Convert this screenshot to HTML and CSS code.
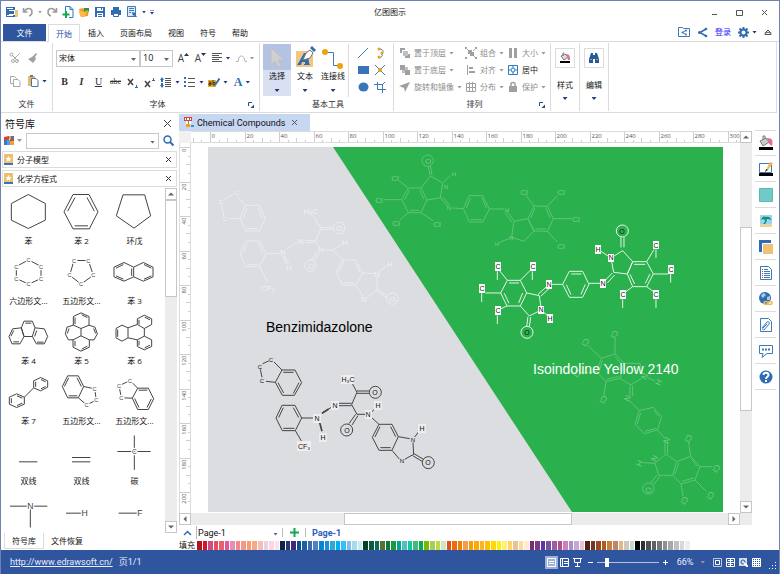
FILE: index.html
```html
<!DOCTYPE html>
<html lang="zh-CN">
<head>
    <meta charset="UTF-8">
    <meta name="viewport" content="width=device-width, initial-scale=1.0">
    <title>亿图图示</title>
    <link rel="stylesheet" href="styles.css">
</head>
<body>

<!-- title bar -->
<header class="titlebar">
    <div class="quick">
        <button class="qa" aria-label="Edraw"><svg width="12" height="12" viewBox="0 0 12 12"><path fill="#2f6cb3" d="M0 1h9v3H3v1h5v3H3v1h6v2H0z"/><path fill="#f0c57a" d="M9 4h3v7H9z"/><path stroke="#fff" d="M1 2.500h6M1 9.500h6"/></svg></button>
        <button class="qa" aria-label="撤销"><svg width="12" height="12" viewBox="0 0 12 12"><path fill="none" stroke="#9a9a9a" stroke-width="1.500" d="M1.500 2v4h4M2 5.500C5 1 10 2 10 6c0 2-1 3.500-3 4"/></svg></button>
        <i class="caret grey"></i>
        <button class="qa" aria-label="重做"><svg width="12" height="12" viewBox="0 0 12 12"><path fill="none" stroke="#9a9a9a" stroke-width="1.500" d="M10.500 2v4h-4M10 5.500C7 1 2 2 2 6c0 2 1 3.500 3 4"/></svg></button>
        <button class="qa" aria-label="新建"><svg width="12" height="12" viewBox="0 0 12 12"><path fill="#fff" stroke="#2f7cc0" d="M3.500 5V.5H8l3 3v8H7"/><path fill="none" stroke="#2f7cc0" d="M8 .5v3h3"/><path stroke="#12a84e" stroke-width="2" d="M4 5v7M.5 8.500h7"/></svg></button>
        <button class="qa" aria-label="打开"><svg width="12" height="12" viewBox="0 0 12 12"><path fill="#f0a020" d="M1 3l4-1 1 1 5-1-1 8-7 1z"/><path fill="#2f8f4e" d="M6 2h5v4L9 4 6 6z"/><path fill="#f6bb4c" d="M1 5l7 1-1 5-5-1z"/></svg></button>
        <button class="qa" aria-label="保存"><svg width="12" height="12" viewBox="0 0 12 12"><path fill="#2f6cb3" d="M1 1h10v10H1z"/><path fill="#fff" d="M3 2h6v3H3zM3 7h6v4H3z"/><path stroke="#2f6cb3" d="M4 8.500h4M4 10.500h4M7.500 2v2"/></svg></button>
        <button class="qa" aria-label="打印"><svg width="12" height="12" viewBox="0 0 12 12"><path fill="#2f6cb3" d="M3 1h6v3H3zM1 4h10v5H1z"/><path fill="#fff" stroke="#2f6cb3" d="M3.500 7.500h5v3h-5z"/></svg></button>
        <button class="qa" aria-label="导出"><svg width="12" height="12" viewBox="0 0 12 12"><path fill="#dce9f6" stroke="#3d7ab8" d="M1.500 .5h8v10h-8z"/><path stroke="#3d7ab8" d="M3 2.500h5M3 4.500h5M3 6.500h2"/><path fill="#2f6cb3" d="M6 6l4 1-1 1 2 3H9L8 9l-1 1z"/></svg></button>
        <i class="caret"></i>
        <i class="caret bar"></i>
    </div>
    <h1 class="app-title">亿图图示</h1>
    <div class="window-buttons">
        <button aria-label="最小化"><svg width="9" height="9" viewBox="0 0 9 9"><path stroke="#555" d="M2 6.500h5"/></svg></button>
        <button aria-label="最大化"><svg width="9" height="9" viewBox="0 0 9 9"><path fill="none" stroke="#555" d="M1.500 2.500h6v5h-6z"/></svg></button>
        <button aria-label="关闭"><svg width="9" height="9" viewBox="0 0 9 9"><path stroke="#555" d="M2 2l5 5M7 2L2 7"/></svg></button>
    </div>
</header>

<!-- ribbon tabs -->
<nav class="tabs">
    <button class="tab file-tab">文件</button>
    <button class="tab active">开始</button>
    <button class="tab">插入</button>
    <button class="tab">页面布局</button>
    <button class="tab">视图</button>
    <button class="tab">符号</button>
    <button class="tab">帮助</button>
    <div class="account">
        <button aria-label="共享文件夹"><svg width="12" height="12" viewBox="0 0 12 12"><path fill="none" stroke="#3d7ab8" d="M.5 1.500h4l1 1h6v8H.5z"/><path fill="none" stroke="#3d7ab8" d="M8 4.500L4.500 6.500 8 8.500"/><circle cx="8" cy="4.500" r="1" fill="#3d7ab8"/><circle cx="4.500" cy="6.500" r="1" fill="#3d7ab8"/><circle cx="8" cy="8.500" r="1" fill="#3d7ab8"/></svg></button>
        <button aria-label="分享"><svg width="11" height="11" viewBox="0 0 11 11"><path fill="none" stroke="#2f6cb3" stroke-width="1.500" d="M9 2L3 5.500 9 9"/><circle cx="2.500" cy="5.500" r="1.500" fill="#2f6cb3"/><circle cx="9" cy="2" r="1.300" fill="#2f6cb3"/><circle cx="9" cy="9" r="1.300" fill="#2f6cb3"/></svg></button>
        <a class="login" href="#">登录</a>
        <button aria-label="设置"><svg width="11" height="11" viewBox="0 0 11 11"><circle cx="5.500" cy="5.500" r="3" fill="none" stroke="#2f6cb3" stroke-width="2"/><path stroke="#2f6cb3" stroke-width="2" d="M5.500 0v2M5.500 9v2M0 5.500h2M9 5.500h2M1.500 1.500l1.500 1.500M8 8l1.500 1.500M9.500 1.500L8 3M3 8L1.500 9.500"/></svg><i class="caret"></i></button>
        <button aria-label="折叠功能区"><svg width="8" height="8" viewBox="0 0 8 8"><path fill="none" stroke="#555" d="M1 6.500h6L7 5 4 2 1 5zM2 5l2-1 2 1"/></svg></button>
    </div>
</nav>

<!-- ribbon -->
<section class="ribbon">
    <div class="group g-file">
        <div class="clip">
            <button aria-label="剪切"><svg width="12" height="12" viewBox="0 0 12 12"><path fill="none" stroke="#a8a8a8" d="M10.500 1.500L5 7M3 3l6 6"/><circle cx="2.500" cy="2.500" r="1.500" fill="none" stroke="#a8a8a8"/><circle cx="8" cy="9" r="1.500" fill="none" stroke="#a8a8a8"/><circle cx="4" cy="9" r="1.500" fill="none" stroke="#a8a8a8"/></svg></button>
            <button aria-label="格式刷"><svg width="12" height="12" viewBox="0 0 12 12"><path fill="#a0a0a0" d="M9 1l1 1-2 3 1 2-3 4-5-4 4-2 1-1z"/></svg></button>
            <button aria-label="复制"><svg width="12" height="12" viewBox="0 0 12 12"><path fill="#fff" stroke="#a8a8a8" d="M1.500 1.500h4l2 2v5h-6z"/><path fill="#fff" stroke="#a8a8a8" d="M4.500 4.500H9l2 2v5H4.500z"/></svg></button>
            <button aria-label="粘贴"><svg width="12" height="12" viewBox="0 0 12 12"><path fill="#edb95e" d="M1 1h7v10H1z"/><path fill="#777" d="M3 0h3v2H3z"/><path fill="#fff" stroke="#3d7ab8" d="M4.500 3.500H9l2 2v6H4.500z"/></svg><i class="caret"></i></button>
        </div>
        <div class="group-label">文件</div>
    </div>

    <div class="group g-font">
        <div class="font-row">
            <span class="select family"><select aria-label="字体"><option>宋体</option></select></span>
            <span class="select size"><select aria-label="字号"><option>10</option></select></span>
            <button class="b17" aria-label="增大字号"><span class="big-a">A</span><svg width="5" height="10" viewBox="0 0 5 10"><path fill="#333" d="M0 3l2.500-3L5 3z"/></svg></button>
            <button class="b17" aria-label="减小字号"><span class="big-a">A</span><svg width="5" height="10" viewBox="0 0 5 10"><path fill="#333" d="M0 0h5L2.500 3z"/></svg></button>
            <button class="b24" aria-label="对齐"><svg width="11" height="10" viewBox="0 0 11 10"><path stroke="#555" stroke-width="1" d="M0 .5h10M0 2.500h7M0 4.500h10M0 6.500h7M0 8.500h10"/></svg><i class="caret"></i></button>
            <button class="b24" aria-label="曲线文本"><svg width="11" height="10" viewBox="0 0 11 10"><path fill="none" stroke="#b0b0b0" d="M0 8.500h2C3 1 8 1 9 8.500h2"/></svg><i class="caret grey"></i></button>
        </div>
        <div class="font-row">
            <button class="b17 serif"><b>B</b></button>
            <button class="b17 serif"><b><i>I</i></b></button>
            <button class="b17 serif"><u>U</u></button>
            <button class="b17 serif strike"><s>abc</s></button>
            <button class="b17" aria-label="下标"><svg width="11" height="11" viewBox="0 0 11 11"><path stroke="#444" stroke-width="1.500" d="M1 2l5 6M6 2L1 8"/><path stroke="#2f6cb3" d="M8 10.500h3M9.500 8v2"/></svg></button>
            <button class="b17" aria-label="上标"><svg width="11" height="11" viewBox="0 0 11 11"><path stroke="#444" stroke-width="1.500" d="M1 4l5 6M6 4l-5 6"/><path stroke="#2f6cb3" d="M8 3.500h3M9.500 1v2"/></svg></button>
            <button class="b24" aria-label="行距"><svg width="12" height="11" viewBox="0 0 12 11"><path stroke="#555" d="M5 1.500h6M5 3.500h6M5 5.500h6M5 7.500h6M5 9.500h6"/><path fill="#2f6cb3" d="M0 3l2-3 2 3zM0 8l2 3 2-3zM1 3h2v2H1zM1 6h2v2H1z"/></svg><i class="caret"></i></button>
            <button class="b24" aria-label="项目符号"><svg width="12" height="11" viewBox="0 0 12 11"><path stroke="#555" d="M4 1.500h7M4 5.500h7M4 9.500h7"/><path fill="#2f6cb3" d="M0 0h2v2H0zM0 4h2v2H0zM0 8h2v2H0z"/></svg><i class="caret"></i></button>
            <button class="b24" aria-label="突出显示"><svg width="12" height="11" viewBox="0 0 12 11"><path fill="#f0a81c" d="M0 3h8v7H0z"/><path stroke="#333" fill="none" d="M1 5h2v3H1V6.500h2M5 3v5h2V5.500H5"/><path stroke="#2f6cb3" stroke-width="2" d="M11.500 1.500L7 8"/></svg><i class="caret"></i></button>
            <button class="b24 serif font-color"><b>A</b><i class="caret"></i></button>
        </div>
        <div class="group-label">字体
            <button class="launcher" aria-label="字体设置"><svg width="6" height="6" viewBox="0 0 6 6"><path fill="none" stroke="#2b4a8c" d="M.5 4V.5H4"/><path fill="#2b4a8c" d="M6 2.500V6H2.500z"/></svg></button>
        </div>
    </div>

    <div class="group g-tools">
        <div class="tools-body">
            <button class="big selected"><svg width="26" height="26" viewBox="0 0 26 26"><path fill="#d0d0d0" stroke="#c0c0c4" d="M7 4l13 12h-6l3 6-3 1-3-6-4 4z"/></svg>选择<i class="caret"></i></button>
            <button class="big"><svg width="26" height="26" viewBox="0 0 26 26"><path fill="#f0c884" d="M4 7h17v16H4z"/><path fill="#2f6cb3" d="M5 21l2-3 5-9h4l1 10 1 2h-6v-1h1v-2h-3l-1 3zm6-6h2v-3z"/><path fill="#fff" stroke="#777" d="M11 16l3-7 4-3 3 3-3 5z"/><path fill="#2f6cb3" d="M18 4l2-2 4 4-2 2z"/></svg>文本<i class="caret"></i></button>
            <button class="big"><svg width="26" height="26" viewBox="0 0 26 26"><path fill="none" stroke="#3d7ab8" d="M5 8.500h8.500v13H19"/><circle cx="5" cy="8" r="3" fill="#eda20e"/><circle cx="20" cy="22" r="3" fill="#eda20e"/></svg>连接线<i class="caret"></i></button>
            <div class="shapes">
                <button aria-label="直线"><svg width="12" height="12" viewBox="0 0 12 12"><path stroke="#3d7ab8" d="M1 11L11 1"/></svg></button>
                <button aria-label="弧线"><svg width="12" height="12" viewBox="0 0 12 12"><path fill="none" stroke="#3d7ab8" d="M5 2c5 0 5 4 2 5 2 0 2 3-2 4"/><circle cx="5" cy="2" r="1.500" fill="#eda20e"/><circle cx="8" cy="6" r="1.500" fill="#eda20e"/><circle cx="5" cy="10" r="1.500" fill="#eda20e"/></svg></button>
                <button aria-label="矩形"><svg width="12" height="12" viewBox="0 0 12 12"><path fill="#3a74b8" d="M1 2h11v8H1z"/></svg></button>
                <button aria-label="连接点"><svg width="12" height="12" viewBox="0 0 12 12"><path stroke="#3d7ab8" d="M1 1l10 10M11 1L1 11"/><circle cx="6" cy="6" r="2" fill="#eda20e"/></svg></button>
                <button aria-label="椭圆"><svg width="12" height="12" viewBox="0 0 12 12"><ellipse cx="6.500" cy="6" rx="5" ry="4.500" fill="#3a74b8"/></svg></button>
                <button aria-label="裁剪"><svg width="12" height="12" viewBox="0 0 12 12"><path fill="none" stroke="#3d7ab8" d="M0 3.500h8.500V12M3.500 1v7.500H12M8 4l3-3"/></svg></button>
            </div>
        </div>
        <div class="group-label">基本工具</div>
    </div>

    <div class="group g-arrange">
        <div class="arrange">
            <button class="cmd"><svg width="12" height="12" viewBox="0 0 12 12"><path fill="#a0a0a0" d="M1 1h5v2H3v3H1zM7 7h4v4H6V9h1z"/><path fill="#c0c0c0" d="M4 4h5v5H4z"/></svg>置于顶层<i class="caret grey"></i></button>
            <button class="cmd"><svg width="12" height="12" viewBox="0 0 12 12"><path fill="none" stroke="#b0b0b0" d="M2 2l8 8M10 2L8 4"/><path fill="#a0a0a0" d="M3 3h4v4H3zM5 5h4v4H5zM0 0h2v2H0zM10 0h2v2h-2zM0 10h2v2H0zM10 10h2v2h-2z"/></svg>组合<i class="caret grey"></i></button>
            <button class="cmd"><svg width="12" height="12" viewBox="0 0 12 12"><path fill="#a0a0a0" d="M2 1h3v10H2zM7 1h3v10H7z"/></svg>大小<i class="caret grey"></i></button>
            <button class="cmd"><svg width="12" height="12" viewBox="0 0 12 12"><path fill="#a0a0a0" d="M1 1h5v5H1zM6 6h5v5H6z"/><path fill="#c0c0c0" d="M6 3h3v3H6zM3 6h3v3H3z"/></svg>置于底层<i class="caret grey"></i></button>
            <button class="cmd"><svg width="12" height="12" viewBox="0 0 12 12"><path fill="#a0a0a0" d="M2 1h1v10H2zM4 3h4v2H4zM4 7h6v2H4z"/></svg>对齐<i class="caret grey"></i></button>
            <button class="cmd on"><svg width="12" height="12" viewBox="0 0 12 12"><path fill="none" stroke="#2f7cc0" d="M1.500 1.500h9v9h-9z"/><circle cx="6" cy="6" r="2" fill="none" stroke="#2f7cc0"/><path stroke="#2f7cc0" d="M6 1v3M6 8v3M1 6h3M8 6h3"/></svg>居中</button>
            <button class="cmd"><svg width="12" height="12" viewBox="0 0 12 12"><path fill="#a0a0a0" d="M11 1L6 11 5 7 0 5z"/></svg>旋转和镜像<i class="caret grey"></i></button>
            <button class="cmd"><svg width="12" height="12" viewBox="0 0 12 12"><path fill="none" stroke="#a0a0a0" d="M1.500 2.500h9v8h-9zM4.500 1v10M7.500 1v10M1 6.500h10"/></svg>分布<i class="caret grey"></i></button>
            <button class="cmd"><svg width="12" height="12" viewBox="0 0 12 12"><path fill="#a0a0a0" d="M2 5h8v6H2z"/><path fill="none" stroke="#a0a0a0" stroke-width="1.500" d="M4 5V3c0-2 4-2 4 0v2"/></svg>保护<i class="caret grey"></i></button>
        </div>
        <div class="group-label">排列
            <button class="launcher" aria-label="排列设置"><svg width="6" height="6" viewBox="0 0 6 6"><path fill="none" stroke="#2b4a8c" d="M.5 4V.5H4"/><path fill="#2b4a8c" d="M6 2.500V6H2.500z"/></svg></button>
        </div>
    </div>

    <div class="group">
        <button class="tall"><span class="box"><svg width="12" height="12" viewBox="0 0 12 12"><path fill="#ddd" stroke="#777" d="M2 4l4-2 3 3-4 3z"/><path fill="none" stroke="#777" d="M4 4V1h1"/><path fill="#e0709a" d="M7 2c4 0 4 3 4 6H9z"/><path fill="#000" d="M1 9h10v2H1z"/></svg></span>样式<i class="caret"></i></button>
    </div>
    <div class="group">
        <button class="tall"><span class="box"><svg width="12" height="12" viewBox="0 0 12 12"><path fill="#2a5a96" d="M3 1h2v2h2V1h2l2 6v4H7V7H5v4H1V7z"/><path stroke="#7ba3cf" d="M2 7.500h2M8 7.500h2"/></svg></span>编辑<i class="caret"></i></button>
    </div>
</section>

<main class="main">

    <!-- symbol library -->
    <aside class="library">
        <div class="lib-title"><h2>符号库</h2><button aria-label="关闭符号库"><svg width="9" height="9" viewBox="0 0 9 9"><path stroke="#444" d="M1 1l7 7M8 1L1 8"/></svg></button></div>
        <div class="lib-search">
            <button aria-label="符号库菜单"><svg width="11" height="11" viewBox="0 0 11 11"><path fill="#d8423a" d="M0 2l5-1v4H0z"/><path fill="#3d7ab8" d="M0 5h3v5H0zM7 1h3v3H7z"/><path fill="#4fa2d8" d="M3 5h3v5H3z"/><path fill="#e8a33c" d="M6 6h4v4H6zM5 1h2v3H5z"/><path fill="#d8423a" d="M6 4h4v2H6z"/></svg><i class="caret grey"></i></button>
            <span class="select"><input type="text" aria-label="搜索符号"></span>
            <button aria-label="搜索"><svg width="11" height="11" viewBox="0 0 11 11"><circle cx="4.500" cy="4.500" r="3.500" fill="none" stroke="#2f6cb3" stroke-width="1.500"/><path stroke="#2f6cb3" stroke-width="2" d="M7 7l3.500 3.500"/></svg></button>
        </div>
        <div class="category"><svg width="9" height="11" viewBox="0 0 9 11"><path fill="#edbf6c" d="M0 0h9v9H0z"/><path fill="#3a74b8" d="M0 9h9v2H0z"/><path fill="#fff" d="M4.500 2l1 2h2L6 5.500 6.500 8l-2-1.500-2 1.500L3 5.500 1.500 4h2z"/></svg>分子模型<button aria-label="关闭分子模型"><svg width="7" height="7" viewBox="0 0 7 7"><path stroke="#333" d="M1 1l5 5M6 1L1 6"/></svg></button></div>
        <div class="category"><svg width="9" height="11" viewBox="0 0 9 11"><path fill="#edbf6c" d="M0 0h9v9H0z"/><path fill="#3a74b8" d="M0 9h9v2H0z"/><path fill="#fff" d="M4.500 2l1 2h2L6 5.500 6.500 8l-2-1.500-2 1.500L3 5.500 1.500 4h2z"/></svg>化学方程式<button aria-label="关闭化学方程式"><svg width="7" height="7" viewBox="0 0 7 7"><path stroke="#333" d="M1 1l5 5M6 1L1 6"/></svg></button></div>

        <div class="lib-body">
            <div class="symbols">
                <button class="sym"><svg viewBox="0 0 159 138"><path d="M79 18l51 27v50l-51 25-51-25V45z"/></svg>苯</button>
                <button class="sym"><svg viewBox="0 0 159 138"><path d="M54 18h48l27 52-26 51H54L27 70zM60 27L38 68M96 27l22 41M59 112h40"/></svg>苯 2</button>
                <button class="sym"><svg viewBox="0 0 159 138"><path d="M45 19h65l18 63-50 37-53-37z"/></svg>环戊</button>

                <button class="sym"><svg viewBox="0 0 159 138"><path d="M80 34l37 20v36l-37 17-37-17V54z"/><text x="80" y="40">C</text><text x="117" y="60">C</text><text x="117" y="96">C</text><text x="80" y="113">C</text><text x="43" y="96">C</text><text x="43" y="60">C</text></svg>六边形文...</button>
                <button class="sym"><svg viewBox="0 0 159 138"><path d="M57 36h43l15 44-37 27-34-27z"/><text x="57" y="42">C</text><text x="100" y="42">C</text><text x="115" y="86">C</text><text x="78" y="113">C</text><text x="44" y="86">C</text></svg>五边形文...</button>
                <button class="sym"><svg viewBox="0 0 159 138"><path d="M48 42l29 14v29L48 98 18 85V56zM77 56l29-14 29 14v29l-29 13-29-13M46 48L24 59M46 92L24 82M71 60v22M108 48l22 11M108 92l22-10"/></svg>苯 3</button>

                <button class="sym"><svg viewBox="0 0 159 138"><path d="M32 61l26-3 8 26-12 22H30L21 84zM66 38h25l8 20-8 26H66l-8-26zM99 58l28 3 10 23-10 22h-24L91 84M27 83l8-17M34 100h17M70 44h18M98 84l6-18M105 101h20"/></svg>苯 4</button>
                <button class="sym"><svg viewBox="0 0 159 138"><path d="M78 13l24 11v26L78 60 55 50V24zM78 128l-24-12V94l24-12 25 12v22zM78 60v22M55 50l-19 6-5 20 9 18h14M102 50l18 6 7 20-10 18h-14M60 27v20M80 19l17 8M42 60l-5 15M116 60l6 15M60 97v16M80 122l17-9"/></svg>苯 5</button>
                <button class="sym"><svg viewBox="0 0 159 138"><path d="M60 58v30L42 98 24 88V60l18-10zM88 31l21-11 22 11v17l-22 12-21-12zM109 83l22 11v20l-22 10-21-10V94zM60 58l28-10M109 60v23M88 94l-28-6M29 63v22M93 34v14M110 26l16 8M93 97v14M110 118l16-8"/></svg>苯 6</button>

                <button class="sym"><svg viewBox="0 0 159 138"><path d="M44 76l23 10v21l-23 10-22-10V86zM116 27l21 10v19l-21 11-21-9V37zM67 86l28-28M28 89v15M45 82l16 7M45 111l16-7M101 40v15M117 33l14 7M117 61l14-7"/></svg>苯 7</button>
                <button class="sym"><svg viewBox="0 0 159 138"><path d="M38 22h32l16 32-16 34H38L22 54zM86 54l33 7 5 34-29 14-25-21M41 28L28 54M66 28l13 26M41 82h26"/><text x="119" y="66">C</text><text x="124" y="100">C</text><text x="95" y="114">C</text></svg>五边形文...</button>
                <button class="sym"><svg viewBox="0 0 159 138"><path d="M89 59h32l16 32-16 32H89L73 89zM89 59L66 36 33 52l7 36 33 1M92 65h26M130 91l-13 26M93 117L80 90"/><text x="66" y="42">C</text><text x="33" y="58">C</text><text x="40" y="94">C</text></svg>五边形文...</button>

                <button class="sym"><svg viewBox="0 0 159 138"><path d="M51 100h55"/></svg>双线</button>
                <button class="sym"><svg viewBox="0 0 159 138"><path d="M51 87h55M51 100h55"/></svg>双线</button>
                <button class="sym"><svg viewBox="0 0 159 138"><path d="M28 69h100M79 21v103"/><text class="l" x="79" y="76">C</text></svg>碳</button>

                <button class="sym" aria-label="N"><svg viewBox="0 0 159 138"><path d="M24 53h112M85 53v64"/><text class="xl" x="85" y="62">N</text></svg></button>
                <button class="sym" aria-label="H"><svg viewBox="0 0 159 138"><path d="M33 74h56"/><text class="xl" x="89" y="83">H</text></svg></button>
                <button class="sym" aria-label="F"><svg viewBox="0 0 159 138"><path d="M32 74h60"/><text class="xl" x="96" y="83">F</text></svg></button>
            </div>
            <div class="scroll v lib-scroll"><button class="up" aria-label="向上"></button><span class="thumb"></span><span class="after"></span><button class="down" aria-label="向下"></button></div>
        </div>
        <div class="lib-tabs"><button class="active">符号库</button><button>文件恢复</button></div>
    </aside>

    <!-- drawing area -->
    <section class="workspace">
        <div class="doc-tabs">
            <div class="doc-tab"><svg width="11" height="11" viewBox="0 0 11 11"><path fill="#d8423a" d="M1 0h8v4H1z"/><path fill="#fff" d="M2 1h1v2H2zM4 1h2v2H4zM7 1h1v2H7z"/><path fill="#fff" d="M3 4h5v3H3z"/><path fill="none" stroke="#3fa757" d="M5.500 4v4"/><path fill="#eda20e" d="M3 7h4v3H3z"/><path fill="#3d8fd8" d="M8 8h3v2H8z"/></svg>Chemical Compounds<button aria-label="关闭文档"><svg width="7" height="7" viewBox="0 0 7 7"><path stroke="#555" d="M1 1l5 5M6 1L1 6"/></svg></button></div>
        </div>
        <div class="sheet">
            <div class="corner"></div>
            <svg class="ruler-h" id="rulerH"></svg>
            <div class="scroll v sheet-v"><button class="up" aria-label="向上"></button><span class="before"></span><span class="thumb"></span><span class="after"></span><button class="down" aria-label="向下"></button></div>
            <svg class="ruler-v" id="rulerV"></svg>
            <div class="canvas">
                <svg class="drawing">
                    <g transform="translate(-191 -143)">
                        <path fill="#dcdde1" d="M208 147h515v365H208z"/>
                        <path fill="#2ab04d" d="M333 147h390v365H572z"/>
                    </g>

                    <!-- faded benzimidazolone -->
                    <g class="faint" transform="translate(-15 -31) scale(.3333)">
                        <path d="M208 280h42l18 38-18 39h-40l-17-38zM208 280l-22-25M172 247l-28 16M136 278l8 36M158 320l35-1M246 287l13 31M213 350h33M214 288l-12 29"/>
                        <path d="M209 387h41l20 38-20 39h-40l-18-39zM246 394l14 30M214 394l-13 30M215 457h32M270 425h42M250 464l26 48M332 410l34-20M318 430l14 26M324 430l14 26"/>
                        <path d="M386 386h32M386 392h32M418 388l17-38-26-42M435 346h36M435 352h36M418 388l12 16M424 418l-18 26M431 421l-18 26M444 414l26 1 27-18M470 415l30 28"/>
                        <path d="M500 443l40 2 20 38-20 37h-40l-20-38zM503 450l-15 32M538 452l14 30M504 513h32M560 483l34 2M603 495l1 40-32 22M561 553l-21-33M610 478l22-16M604 532l30 19M604 539l28 18"/>
                        <circle cx="489" cy="348" r="17"/><circle cx="404" cy="461" r="17"/><circle cx="649" cy="560" r="17"/>
                    </g>
                    <g class="faint-text" transform="translate(-191 -143)">
                        <text x="237" y="195" class="s">C</text><text x="221" y="204" class="s">C</text><text x="225" y="221" class="s">C</text>
                        <text x="311" y="214">H₃C</text><text x="283" y="255">N</text><text x="301" y="244">N</text><text x="289" y="270">H</text><text x="268" y="291">CF₃</text>
                        <text x="339" y="231">O</text><text x="321" y="252">N</text><text x="311" y="269">O</text><text x="345" y="245">H</text>
                        <text x="377" y="277">N</text><text x="390" y="267">H</text><text x="364" y="302">N</text><text x="392" y="302">O</text>
                    </g>

                    <!-- faded chlorinated chain, top -->
                    <g class="faint-green" transform="translate(269 -31) scale(.3333)">
                        <path d="M-117 228h-38l-20 35 20 39h38l18-38zM-152 235l-14 28M-121 235l13 27M-151 295h30M-117 228l28-36 37 21-7 44-40 7M-95 163l5 27M-89 162l5 27M-52 213l22-22M-155 228l-28-22M-175 263h-54M-155 302l-26 22M-117 302l36 24M-59 257l22 26M-53 254l22 26M-24 288l34 2"/>
                        <path d="M10 290l18-39h40l20 40-20 39H28zM19 288l13-30M66 257l13 31M32 323h33M88 291h44M134 302l22 28M140 298l22 28"/>
                        <path d="M162 328l42-8 18 37-30 31-37-12zM146 380l-28 12M204 320l18-38 40 1 18 37-18 38-40-1zM212 318l13-29M258 289l13 29M226 351h32M222 282l-24-32M262 283l30-32M280 320h56M262 358l30 32"/>
                        <circle cx="-97" cy="146" r="17"/>
                    </g>
                    <g class="green-text" transform="translate(-191 -143)">
                        <text x="428" y="164">O</text><text x="454" y="176" class="s">H</text><text x="446" y="189" class="s">N</text><text x="449" y="210" class="s">N</text>
                        <text x="395" y="181">Cl</text><text x="379" y="203">Cl</text><text x="396" y="226">Cl</text><text x="437" y="227">Cl</text>
                        <text x="507" y="212" class="s">H</text><text x="511" y="240" class="s">N</text><text x="497" y="246" class="s">H</text>
                        <text x="524" y="195">Cl</text><text x="561" y="195">Cl</text><text x="576" y="222">Cl</text><text x="561" y="249">Cl</text>
                    </g>

                    <!-- faded chlorinated chain, bottom -->
                    <g class="faint-green" transform="translate(269 177) scale(.3333)">
                        <path d="M424 115l41-13 27 28-12 45-42 10-28-30zM428 121l-11 33M465 110l20 22M440 178l36-9M424 115l-40-38M465 102V56M410 155l-46 4M438 185l-6 42"/>
                        <path d="M492 130h48l8 34M544 176l-32 19-32-20M560 172l24 10M510 197v32M518 197v32M508 242l30 30"/>
                        <path d="M538 272l42-10 25 28-13 40-40 11-27-29zM542 278l-10 34M582 270l15 20M555 334l33-9M592 330l22 24M615 366v34M623 366v34"/>
                        <path d="M618 402l-33 28 12 36h41l12-41zM585 430l-36-2M592 464l-20 26M600 469l-20 26M650 425l42-16 28 31-15 40-42 12-25-26M657 428l-13 36M694 417l18 22M665 484l36-10M692 409l-6-42M720 440h38M705 480l34 34M663 492l6 36"/>
                        <circle cx="565" cy="506" r="17"/>
                    </g>
                    <g class="green-text" transform="translate(-191 -143)">
                        <text transform="translate(583 341) rotate(120)">Cl</text><text transform="translate(612 333) rotate(120)">Cl</text><text transform="translate(575 372) rotate(120)">Cl</text><text transform="translate(601 398) rotate(120)">Cl</text>
                        <text transform="translate(656 381) rotate(115)">H</text><text transform="translate(642 375) rotate(115)">N</text><text transform="translate(625 397) rotate(115)">N</text><text transform="translate(664 439) rotate(115)">N</text>
                        <text transform="translate(652 457) rotate(115)">N</text><text transform="translate(637 462) rotate(115)">H</text><text transform="translate(646 489) rotate(115)">O</text>
                        <text transform="translate(686 437) rotate(120)">Cl</text><text transform="translate(714 467) rotate(120)">Cl</text><text transform="translate(708 494) rotate(120)">Cl</text><text transform="translate(682 499) rotate(120)">Cl</text>
                    </g>

                    <!-- isoindoline yellow -->
                    <g class="bright" transform="translate(269 -31) scale(.3333)">
                        <path d="M483 376v30M492 376v30M453 438l35-22 30 33-16 37-41-5zM420 416l24 16M518 449h42l20 37-20 38h-42l-16-38zM522 457h34M570 486l-14 28M524 516l-14-29M560 449l22-36M580 486h44M560 524l22 16M518 524l-22 16M457 483l-23 24M464 489l-22 24M387 514h34"/>
                        <path d="M308 517l20-39h40l19 39-19 39h-40zM334 486h30M376 517l-13 30M333 548l-14-30M308 517h-32M260 524l-26 23M267 530l-25 23"/>
                        <path d="M142 505h39l19 38-19 39h-40l-19-39zM147 513h30M188 543l-12 30M147 574l-14-30M200 543l38 8 6 43-36 18-27-30M142 505l-24-30M181 505l30-30M122 543H76M141 582l-22 10M250 600l14 12M204 614l-4 30M212 616l-4 28"/>
                        <circle cx="487" cy="357" r="18"/><circle cx="201" cy="661" r="18"/>
                        <path d="M588 412v26M632 486v26M588 562v26M488 562v26M112 478v26M217 478v26M65 544v26M112 610v26"/>
                    </g>
                    <g transform="translate(-191 -143)">
                        <path class="plate" d="M653 241h6v8h-6zM668 265h6v9h-6zM653 290h6v9h-6zM620 290h6v9h-6zM495 262h6v9h-6zM530 262h6v9h-6zM479 284h6v9h-6zM495 306h6v9h-6zM595 245h6v9h-6zM608 254h6v8h-6zM600 279h6v9h-6zM546 280h6v9h-6zM538 306h6v8h-6zM547 314h6v9h-6z"/>
                        <g class="atom">
                            <text x="656" y="248">C</text><text x="671" y="272">C</text><text x="656" y="297">C</text><text x="623" y="297">C</text>
                            <text x="498" y="269">C</text><text x="533" y="269">C</text><text x="482" y="291">C</text><text x="498" y="313">C</text>
                            <text x="598" y="252">H</text><text x="611" y="260">N</text><text x="603" y="286">N</text><text x="549" y="287">N</text><text x="541" y="312">N</text><text x="550" y="321">H</text>
                            <text x="622" y="234">O</text><text x="527" y="335">O</text>
                        </g>
                    </g>

                    <!-- benzimidazolone -->
                    <g class="dark" transform="translate(-15 167) scale(.3333)">
                        <path d="M318 180h39l20 38-22 38h-36l-21-39zM318 180l-24-24M278 153l-18 8M253 178l5 24M270 214l28 3M322 187h31M369 218l-17 32M323 249l-17-31"/>
                        <path d="M318 286h39l20 38-19 38h-39l-19-38zM352 293l16 30M322 293l-14 30M322 355h33M377 324h35M358 362l20 34M438 310l28-18"/>
                        <path class="thick" d="M430 334l8 30M438 310l20-13"/>
                        <path d="M487 280h40M487 287h40M527 284l16-37-14-26M543 243h36M543 250h36M527 284l16 29h26M539 313l-20 28M546 317l-18 28M586 307l12-12M584 320l25 23"/>
                        <path d="M609 343h39l19 37-19 41h-39l-20-39zM612 350l-15 31M644 350l15 30M613 413h31M667 380l34 6M711 397l2 36-27 15M670 447l-22-26M716 381l14-18M712 430l31 18M710 437l30 18"/>
                        <circle cx="598" cy="247" r="18"/><circle cx="512" cy="360" r="18"/><circle cx="757" cy="458" r="18"/>
                    </g>
                    <g transform="translate(-191 -143)">
                        <path class="plate grey" d="M341 375h13v9h-13zM313 414h8v9h-8zM319 433h8v9h-8zM297 441h14v10h-14zM331 401h8v9h-8zM374 401h8v9h-8zM365 410h7v9h-7zM418 424h8v9h-8z"/>
                        <g class="atom">
                            <text x="348" y="382">H₃C</text><text x="317" y="421">N</text><text x="323" y="440">H</text><text x="304" y="449">CF₃</text>
                            <text x="335" y="408">N</text><text x="378" y="408">H</text><text x="368" y="417">N</text><text x="422" y="431">H</text>
                            <text x="375" y="395">O</text><text x="347" y="433">O</text><text x="428" y="465">O</text>
                            <text x="413" y="442" class="tiny">N</text><text x="402" y="463" class="tiny">N</text>
                            <text x="271" y="362" class="tiny">C</text><text x="260" y="369" class="tiny">C</text><text x="262" y="383" class="tiny">C</text>
                        </g>
                        <text class="caption" x="266" y="332">Benzimidazolone</text>
                        <text class="caption white" x="533" y="374">Isoindoline Yellow 2140</text>
                    </g>
                </svg>
            </div>
            <div class="scroll h sheet-h"><button class="left" aria-label="向左"></button><span class="before"></span><span class="thumb"></span><span class="after"></span><button class="right" aria-label="向右"></button></div>
        </div>
        <div class="pages">
            <button class="chevron" aria-label="展开"><svg width="9" height="6" viewBox="0 0 9 6"><path fill="none" stroke="#2f6cb3" stroke-width="1.500" d="M1 5l3.500-3.500L8 5"/></svg></button>
            <span class="select page-select"><select aria-label="页面"><option>Page-1</option></select></span>
            <button class="add" aria-label="添加页面"><svg width="9" height="9" viewBox="0 0 9 9"><path stroke="#12a84e" stroke-width="2" d="M4.500 0v9M0 4.500h9"/></svg></button>
            <button class="page-tab">Page-1</button>
        </div>
        <div class="fill"><span>填充</span><div class="palette" id="palette"></div></div>
    </section>

    <!-- right hand tools -->
    <nav class="side">
        <button aria-label="填充"><svg width="16" height="16" viewBox="0 0 16 16"><path fill="#ccc" stroke="#777" d="M2 6l6-3 3 4-6 4z"/><path fill="none" stroke="#777" d="M5 5V1h2v3"/><path fill="#e0709a" d="M9 3c6 0 6 3 5 8l-3-2z"/><path fill="#000" d="M1 12h14v3H1z"/></svg></button>
        <button aria-label="线条"><svg width="16" height="16" viewBox="0 0 16 16"><path fill="#fff" stroke="#3d7ab8" d="M1.500 2.500h12v9h-12z"/><path fill="#edb95e" d="M12 1l3 1-5 7-2 0z"/><path fill="#333" d="M8 8l2 1-3 2z"/><path fill="#000" d="M1 12h14v3H1z"/></svg></button>
        <button aria-label="主题颜色"><svg width="16" height="16" viewBox="0 0 16 16"><path fill="#70cbc8" stroke="#5fb8b5" d="M1.500 1.500h13v13h-13z"/></svg></button>
        <button aria-label="图片"><svg width="16" height="16" viewBox="0 0 16 16"><path fill="#9fd4ee" d="M2 2h12v9H2z"/><path fill="#e8d6a0" d="M2 11h12v3H2z"/><path fill="#12907c" d="M3 7c1-4 4-4 5-3 3-1 5 1 5 3-2-1-3-1-4-1 0 2-1 4-2 5H5c2-2 2-3 2-4-1-1-3-1-4 0z"/></svg></button>
        <button aria-label="图层"><svg width="16" height="16" viewBox="0 0 16 16"><path fill="#2f6cb3" d="M1 1h12v12H1z"/><path fill="#edc274" stroke="#fff" d="M4.500 4.500h11v11h-11z"/></svg></button>
        <button aria-label="文档"><svg width="16" height="16" viewBox="0 0 16 16"><path fill="#fff" stroke="#3d7ab8" d="M2.500 1.500h8l3 3v10h-11z"/><path stroke="#d8423a" d="M4 4.500h1M4 6.500h1M4 8.500h1M4 10.500h1M4 12.500h1"/><path stroke="#3d7ab8" d="M6 4.500h4M6 6.500h6M6 8.500h6M6 10.500h6M6 12.500h6"/></svg></button>
        <button aria-label="超链接"><svg width="16" height="16" viewBox="0 0 16 16"><circle cx="7" cy="7" r="6" fill="#2f6cb3"/><path fill="#a5cbe9" d="M3 4l3-2 2 2-2 2-2 1zM9 6l3-1v4H9z"/><path fill="none" stroke="#edb95e" stroke-width="1.500" d="M6 12c0-2 4-2 4 0s-4 2-4 0zM10 12c0-2 4-2 4 0s-4 2-4 0z"/></svg></button>
        <button aria-label="附件"><svg width="16" height="16" viewBox="0 0 16 16"><path fill="#fff" stroke="#3d7ab8" d="M2.500 1.500h8l3 3v10h-11z"/><path fill="none" stroke="#3d7ab8" d="M4 11l5-6c2-1 3 1 2 2l-5 6c-1 0-2-1-1-2l4-4"/></svg></button>
        <button aria-label="批注"><svg width="16" height="16" viewBox="0 0 16 16"><path fill="#fff" stroke="#3d7ab8" d="M1.500 2.500h13v8H9l-5 4 1-4H1.500z"/><path stroke="#3d7ab8" stroke-width="2" d="M4 6.500h2M7 6.500h2M10 6.500h2"/></svg></button>
        <button aria-label="帮助"><svg width="16" height="16" viewBox="0 0 16 16"><circle cx="8" cy="8" r="6.500" fill="#2f6cb3"/><path fill="none" stroke="#fff" stroke-width="2" d="M5.500 6c0-3 5-3 5 0 0 2-2.500 1.500-2.500 4M8 11v2"/></svg></button>
    </nav>
</main>

<footer class="status">
    <a href="http://www.edrawsoft.cn/">http://www.edrawsoft.cn/</a>
    <span>页1/1</span>
    <div class="view">
        <button class="on" aria-label="普通视图"><svg width="9" height="9" viewBox="0 0 9 9"><path fill="none" stroke="#fff" d="M.5 .5h8v8h-8zM2 3.500h5M2 5.500h5"/></svg></button>
        <button aria-label="大纲视图"><svg width="9" height="9" viewBox="0 0 9 9"><path fill="none" stroke="#fff" d="M.5 .5h8v8h-8zM2.500 1v7M4 3.500h4M4 5.500h4"/></svg></button>
        <button aria-label="演示"><svg width="9" height="9" viewBox="0 0 9 9"><path fill="none" stroke="#fff" d="M0 .5h9M1.500 1v3.500h6V1M4.500 5v3M2 8.500h5"/></svg></button>
        <button aria-label="缩小"><svg width="9" height="9" viewBox="0 0 9 9"><path stroke="#fff" d="M2 4.500h5"/></svg></button>
        <input type="range" min="10" max="400" value="66" aria-label="缩放">
        <button aria-label="放大"><svg width="9" height="9" viewBox="0 0 9 9"><path stroke="#fff" d="M2 4.500h5M4.500 2v5"/></svg></button>
        <button class="zoom">66%<i class="caret grey"></i></button>
        <button aria-label="适合页面"><svg width="9" height="9" viewBox="0 0 9 9"><path fill="none" stroke="#fff" d="M2.500 2.500h4v4h-4z"/><path fill="none" stroke="#b9c7e4" d="M.5 .5h8v8h-8z"/></svg></button>
        <button aria-label="适合窗口"><svg width="9" height="9" viewBox="0 0 9 9"><path fill="none" stroke="#fff" d="M.5 .5h8v8h-8zM4.500 0v9M0 4.500h9M2 2.500h5M2 6.500h5"/></svg></button>
        <button aria-label="放大镜"><svg width="9" height="9" viewBox="0 0 9 9"><path fill="#d5deef" d="M0 0h8v8H0z"/><circle cx="4" cy="4" r="2" fill="none" stroke="#2f559f"/><path stroke="#fff" stroke-width="2" d="M5 5l4 4"/></svg></button>
        <button aria-label="网格"><svg width="9" height="9" viewBox="0 0 9 9"><path fill="none" stroke="#fff" d="M.5 .5h8v8h-8zM2.500 0v9M4.500 0v9M6.500 0v9M0 2.500h9M0 4.500h9M0 6.500h9"/></svg></button>
    </div>
    <svg class="grip" width="8" height="8" viewBox="0 0 8 8"><path fill="#fff" d="M6 0h1v1H6zM3 3h1v1H3zM6 3h1v1H6zM0 6h1v1H0zM3 6h1v1H3zM6 6h1v1H6z"/></svg>
</footer>

<script src="script.js"></script>
</body>
</html>
```

FILE: styles.css
```css
* {
    box-sizing: border-box;
}

body {
    margin: 0;
    height: 100vh;
    display: flex;
    flex-direction: column;
    overflow: hidden;
    background-color: #fff;
    border: 1px solid #6f82b5;
    border-bottom: none;
    color: #111;
    font-family: "Open Sans", "Noto Sans CJK SC", sans-serif;
    font-size: 8px;
    line-height: 12px;
}

button {
    display: flex;
    align-items: center;
    justify-content: center;
    padding: 0;
    border: none;
    background: none;
    color: inherit;
    font: inherit;
    cursor: pointer;
}

svg {
    display: block;
    flex: none;
}

h1, h2 {
    margin: 0;
    font-weight: normal;
}

select, input {
    font: inherit;
    color: inherit;
    margin: 0;
}

.caret {
    flex: none;
    width: 5px;
    height: 3px;
    background-color: #1f3c80;
    clip-path: polygon(0 0, 100% 0, 50% 100%);
}

.caret.grey {
    background-color: #999;
}

.caret.bar {
    height: 5px;
    clip-path: polygon(0 0, 100% 0, 100% 20%, 0 20%, 0 50%, 100% 50%, 50% 100%, 0 50%);
}

/* title bar */
.titlebar {
    display: grid;
    grid-template-columns: 1fr auto 1fr;
    align-items: center;
    height: 22px;
    flex: none;
}

.quick {
    display: flex;
    align-items: center;
    gap: 4px;
    padding-left: 5px;
}

.quick .caret {
    width: 4px;
}

.app-title {
    font-size: 8px;
}

.window-buttons {
    display: flex;
    justify-content: flex-end;
    gap: 16px;
    padding-right: 10px;
}

/* ribbon tabs */
.tabs {
    display: flex;
    flex: none;
    height: 19px;
    padding-left: 2px;
    border-bottom: 1px solid #dcdcdc;
}

.tab {
    padding: 0 8px;
    margin-top: 1px;
}

.file-tab {
    width: 43px;
    margin-right: 2px;
    background-color: #2f559f;
    color: #fff;
}

.tab.active {
    padding: 0 7px;
    height: 18px;
    border: 1px solid #dcdcdc;
    border-bottom: none;
    background-color: #fff;
    color: #2f559f;
}

.account {
    display: flex;
    align-items: center;
    gap: 7px;
    margin-left: auto;
    padding-right: 7px;
}

.account button {
    gap: 3px;
}

.login {
    color: #2a22ff;
    text-decoration: none;
}

/* ribbon */
.ribbon {
    display: flex;
    flex: none;
    height: 71px;
    margin-right: 2px;
    border-bottom: 1px solid #dcdcdc;
    border-right: 1px solid #dcdcdc;
}

.group {
    display: flex;
    flex-direction: column;
    margin: 1px 0;
    border-right: 1px solid #dcdcdc;
}

.group-label {
    position: relative;
    margin-top: auto;
    padding-bottom: 1px;
    text-align: center;
    color: #333;
}

.launcher {
    position: absolute;
    right: 5px;
    top: 4px;
}

.g-file {
    width: 52px;
}

.clip {
    display: grid;
    grid-template-columns: 18px 24px;
    row-gap: 11px;
    padding: 9px 0 0 6px;
}

.clip button {
    justify-content: flex-start;
    gap: 3px;
    padding-left: 2px;
}

.g-font {
    width: 207px;
    padding-left: 3px;
}

.font-row {
    display: flex;
    align-items: center;
    height: 18px;
    margin-top: 6px;
}

.select {
    position: relative;
    display: flex;
    height: 17px;
}

.select::after {
    content: "";
    position: absolute;
    right: 4px;
    top: 50%;
    width: 5px;
    height: 3px;
    background-color: #666;
    clip-path: polygon(0 0, 100% 0, 50% 100%);
    pointer-events: none;
}

.select select, .select input {
    appearance: none;
    width: 100%;
    padding: 0 2px;
    border: 1px solid #c8c8c8;
    border-radius: 0;
    background-color: #fff;
    outline: none;
}

.family {
    width: 84px;
}

.size {
    width: 33px;
    margin-right: 2px;
}

.size select {
    font-size: 9px;
}

.b17 {
    width: 17px;
    flex: none;
}

.b24 {
    width: 24px;
    flex: none;
    gap: 3px;
}

.big-a {
    font-size: 10px;
    color: #444;
}

.serif {
    font-family: "Liberation Serif", serif;
    font-size: 10px;
    color: #333;
}

.strike {
    font-size: 8px;
}

.font-color {
    color: #2f6cb3;
    font-size: 12px;
}

.g-tools {
    width: 134px;
    padding-left: 3px;
}

.tools-body {
    display: flex;
    padding-top: 1px;
}

.big {
    flex-direction: column;
    justify-content: flex-start;
    width: 28px;
    height: 52px;
}

.big .caret {
    margin-top: 7px;
}

.big.selected {
    background: linear-gradient(#b4c3e2 50%, #d8e0f2 50%);
}

.shapes {
    display: grid;
    grid-template-columns: 17px 17px;
    row-gap: 5px;
    align-content: start;
    margin-left: 1px;
    padding: 3px 0 0 5px;
    border-left: 1px solid #dcdcdc;
    height: 53px;
}

.g-arrange {
    width: 157px;
    padding-left: 5px;
}

.arrange {
    display: grid;
    grid-template-columns: auto auto auto;
    justify-content: start;
    gap: 5px 3px;
    padding-top: 4px;
    color: #8c8c8c;
}

.cmd {
    justify-content: flex-start;
    gap: 3px;
}

.cmd.on {
    color: #222;
}

.tall {
    flex-direction: column;
    width: 28px;
    padding-top: 5px;
}

.box {
    display: flex;
    align-items: center;
    justify-content: center;
    width: 20px;
    height: 20px;
    margin-bottom: 11px;
    border: 1px solid #dcdcdc;
}

.tall .caret {
    margin-top: 6px;
}

/* main area */
.main {
    display: flex;
    flex: 1;
    min-height: 0;
}

.library {
    display: flex;
    flex-direction: column;
    width: 176px;
    flex: none;
    padding-left: 1px;
}

.lib-title {
    display: flex;
    justify-content: space-between;
    align-items: center;
    height: 19px;
    padding: 2px 5px 0 3px;
}

.lib-title h2 {
    font-size: 10px;
}

.lib-search {
    display: flex;
    align-items: center;
    height: 17px;
    gap: 4px;
    padding: 0 3px 0 2px;
}

.lib-search button {
    gap: 2px;
}

.lib-search .select {
    flex: 1;
    height: 16px;
}

.category {
    display: flex;
    align-items: center;
    gap: 4px;
    height: 17px;
    margin-top: 2px;
    padding: 0 4px 0 1px;
    border: 1px solid #dcdcdc;
}

.category button {
    margin-left: auto;
}

.lib-body {
    display: flex;
    flex: 1;
    min-height: 0;
    margin-top: 1px;
}

.symbols {
    display: grid;
    grid-template-columns: repeat(3, 53px);
    grid-auto-rows: 60px;
    flex: 1;
    overflow: hidden;
}

.sym {
    flex-direction: column;
    justify-content: flex-start;
    white-space: nowrap;
}

.sym svg {
    width: 100%;
    height: 47px;
    fill: none;
    stroke: #444;
    stroke-width: 3;
}

.sym text {
    fill: #444;
    stroke: #fff;
    stroke-width: 7;
    paint-order: stroke;
    text-anchor: middle;
    font-family: "Liberation Sans", sans-serif;
    font-size: 17px;
}

.sym .l {
    font-size: 20px;
}

.sym .xl {
    font-size: 26px;
}

.lib-tabs {
    display: flex;
    flex: none;
    height: 17px;
    padding: 0 0 1px 2px;
}

.lib-tabs button {
    padding: 0 7px;
}

.lib-tabs .active {
    border: 1px solid #dcdcdc;
    border-top: none;
}

/* scroll bars */
.scroll {
    display: flex;
    background-color: #ececec;
}

.scroll.v {
    flex-direction: column;
    width: 12px;
}

.scroll button, .thumb {
    border: 1px solid #c6c6c6;
    background-color: #fff;
}

.scroll button {
    flex: none;
    width: 12px;
    height: 12px;
}

.scroll button::before {
    content: "";
    width: 6px;
    height: 6px;
    background-color: #666;
    clip-path: polygon(0 75%, 50% 25%, 100% 75%);
}

.scroll .down::before {
    clip-path: polygon(0 25%, 100% 25%, 50% 75%);
}

.scroll .left::before {
    clip-path: polygon(75% 0, 75% 100%, 25% 50%);
}

.scroll .right::before {
    clip-path: polygon(25% 0, 75% 50%, 25% 100%);
}

.lib-scroll .thumb { flex: 96; }
.lib-scroll .after { flex: 225; }

.sheet-v .before { flex: 84; }
.sheet-v .thumb { flex: 183; }
.sheet-v .after { flex: 91; }

.sheet-h .before { flex: 154; }
.sheet-h .thumb { flex: 228; }
.sheet-h .after { flex: 157; }

/* workspace */
.workspace {
    display: flex;
    flex-direction: column;
    flex: 1;
    min-width: 0;
    padding-left: 2px;
}

.doc-tabs {
    display: flex;
    flex: none;
    height: 18px;
    padding-top: 1px;
}

.doc-tab {
    display: flex;
    align-items: center;
    gap: 3px;
    padding: 0 12px 0 4px;
    background-color: #c7d6f1;
    font-family: Roboto, sans-serif;
    font-size: 9px;
}

.doc-tab button {
    margin-left: 3px;
}

.sheet {
    display: grid;
    grid-template-columns: 12px 1fr 12px;
    grid-template-rows: 12px 1fr 12px;
    flex: 1;
    min-height: 0;
}

.corner {
    background-color: #f1f1f1;
}

.ruler-h, .ruler-v {
    width: 100%;
    height: 100%;
    overflow: hidden;
    stroke: #cfcfcf;
    border: 0 solid #dcdcdc;
}

.ruler-h {
    border-width: 1px 0;
}

.ruler-v {
    border-width: 0 1px;
}

.ruler-h text, .ruler-v text {
    fill: #555;
    stroke: none;
    font-size: 6px;
}

.sheet-v {
    grid-column: 3;
    grid-row: 1 / 3;
}

.sheet-h {
    grid-column: 1 / 3;
}

.sheet::after {
    content: "";
    background-color: #ececec;
}

.canvas {
    overflow: hidden;
    min-height: 0;
}

.drawing {
    width: 100%;
    height: 100%;
    fill: none;
    font-family: "Liberation Sans", sans-serif;
}

.drawing text {
    text-anchor: middle;
    font-size: 8px;
}

.drawing .s {
    font-size: 6px;
}

.faint {
    stroke: #fff;
    stroke-width: 3;
    opacity: .45;
}

.faint-text text {
    fill: #fff;
    opacity: .6;
}

.faint-green {
    stroke: #fff;
    stroke-width: 3;
    opacity: .25;
}

.green-text text {
    fill: #fff;
    opacity: .35;
}

.bright {
    stroke: #e4f6e8;
    stroke-width: 3;
}

.dark {
    stroke: #444;
    stroke-width: 3;
}

.thick {
    stroke-width: 5;
}

.plate {
    fill: #fff;
}

.plate.grey {
    fill: #eeeef0;
}

.atom {
    fill: #111;
}

.drawing .atom text {
    font-size: 7px;
}

.drawing .atom .tiny {
    font-size: 6px;
}

.drawing .caption {
    fill: #000;
    font-size: 14px;
    text-anchor: start;
}

.drawing .caption.white {
    fill: #fff;
}

.pages {
    display: flex;
    align-items: center;
    flex: none;
    height: 15px;
    font-family: Roboto, sans-serif;
    font-size: 9px;
}

.chevron {
    width: 17px;
}

.page-select {
    width: 86px;
    height: 13px;
}

.page-select select {
    border: none;
    border-left: 1px solid #bbb;
    padding: 0 1px;
}

.add {
    width: 24px;
    height: 9px;
    border: 1px solid #bbb;
    border-width: 0 1px;
    margin-right: 6px;
}

.page-tab {
    color: #2a5bc0;
    font-weight: bold;
}

.fill {
    display: flex;
    align-items: center;
    flex: none;
    height: 10px;
}

.fill span {
    flex: none;
    width: 18px;
}

.palette {
    display: flex;
    gap: 1px;
    width: 86%;
    height: 9px;
}

.palette button {
    flex: 1;
    min-width: 0;
}

/* right hand tools */
.side {
    display: flex;
    flex-direction: column;
    align-items: center;
    width: 27px;
    flex: none;
    padding-top: 17px;
}

.side button {
    width: 21px;
    height: 26px;
    border-bottom: 1px solid #dcdcdc;
}

.side button:first-child {
    border-top: 1px solid #dcdcdc;
}

/* status bar */
.status {
    display: flex;
    align-items: center;
    flex: none;
    height: 24px;
    margin: 0 -1px;
    padding: 0 3px 0 10px;
    gap: 6px;
    background-color: #2f559f;
    color: #e8eefa;
    font-family: Roboto, "Noto Sans CJK SC", sans-serif;
    font-size: 9px;
}

.status a {
    color: inherit;
}

.view {
    display: flex;
    align-items: center;
    margin-left: auto;
}

.view button {
    width: 13px;
    height: 13px;
}

.view .on {
    background-color: #9db1d8;
}

.view .zoom {
    width: 38px;
    gap: 7px;
    margin-right: 1px;
}

.view input {
    appearance: none;
    width: 62px;
    height: 9px;
    margin: 0;
    background: linear-gradient(#b8c2d8, #b8c2d8) center / 100% 1px no-repeat;
}

.view input::-webkit-slider-thumb {
    appearance: none;
    width: 4px;
    height: 9px;
    background-color: #fff;
}

.grip {
    align-self: flex-end;
    margin-bottom: 4px;
}
```

FILE: script.js
```js
var SVG = 'http://www.w3.org/2000/svg';

var colors = [
    '#b5121b', '#d9142a', '#c94f7c', '#e84a5f', '#ea5f6c', '#e8559a', '#e091b5', '#f08a8a', '#f29a8a', '#ff9a6e', '#f4a98a', '#f7bdb8', '#e6d3e6', '#ffd5e5', '#fde0e8',
    '#0e2348', '#2b3a6b', '#43267a', '#0b4f8f', '#1a5fa8', '#3f6ab0', '#4f80c0', '#0a84d0', '#1a90d8', '#2ca8dc', '#00b0f0', '#33c0f7', '#7fbfe8', '#a6dbe8', '#cdeaf0',
    '#06402b', '#0a5c3a', '#0a6b5e', '#5a7030', '#0a7a3c', '#1a9a3c', '#00a88c', '#50c0b8', '#10c8a8', '#48b878', '#00b050', '#7ab800', '#a5cf5a', '#bfdb3c', '#cfe6c8',
    '#e05018', '#ee6a10', '#f08000', '#f59a50', '#f5a000', '#ffa800', '#ffb030', '#ffc000', '#ffd800', '#fff000', '#fff07a', '#ffd26a', '#e9c490', '#ffd8a0', '#ffeccf',
    '#7a2a70', '#7a3a88', '#5a3a98', '#7a50a0', '#9a60a0', '#b05090', '#d080b8', '#a890c8', '#c8a8d0', '#e8c0dc',
    '#50200c', '#703828', '#9a4a20', '#b05a20', '#c88040', '#b88868', '#e0b880', '#d0c8c0', '#c8d8c8',
    '#000000', '#303030', '#505050', '#606060', '#787878', '#909090', '#a8a8a8', '#c0c0c0', '#d8d8d8', '#eeeeee'
];

var palette = document.getElementById('palette');
colors.forEach(function(color) {
    var swatch = document.createElement('button');
    swatch.style.backgroundColor = color;
    swatch.setAttribute('aria-label', color);
    palette.appendChild(swatch);
});

// one tick every 5 units, a label every 20
function drawRuler(id, start, vertical, last) {
    var ruler = document.getElementById(id);
    var step = 34.5 / 4;

    for (var i = -2; i * 5 <= last + 5; i++) {
        var pos = Math.round(start + i * step) + 0.5;
        var size = i % 4 === 0 ? 12 : (i % 2 === 0 ? 6 : 4);
        var tick = document.createElementNS(SVG, 'path');
        tick.setAttribute('d', vertical ? 'M' + (12 - size) + ' ' + pos + 'H12' : 'M' + pos + ' ' + (12 - size) + 'V12');
        ruler.appendChild(tick);

        if (i % 4 === 0 && i >= 0) {
            var label = document.createElementNS(SVG, 'text');
            label.textContent = i * 5;
            if (vertical) {
                label.setAttribute('text-anchor', 'end');
                label.setAttribute('transform', 'translate(6 ' + (pos + 1) + ') rotate(-90)');
            } else {
                label.setAttribute('x', pos + 1);
                label.setAttribute('y', 6);
            }
            ruler.appendChild(label);
        }
    }
}

drawRuler('rulerH', 19, false, 300);
drawRuler('rulerV', 4, true, 200);
```
